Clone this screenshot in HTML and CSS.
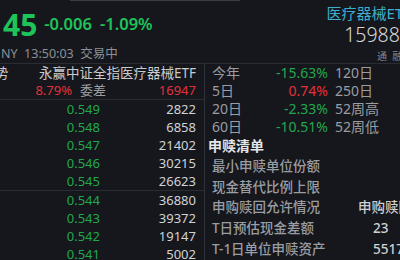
FILE: index.html
```html
<!DOCTYPE html>
<html lang="zh-CN">
<head>
<meta charset="utf-8">
<title>医疗器械ETF</title>
<link rel="stylesheet" href="styles.css">
</head>
<body>
<div class="topbar"><div class="scrollthumb"></div></div>
<header class="head">
  <div class="quote">
    <div class="price-line">
      <span class="price">45</span>
      <span class="chg">-0.006</span>
      <span class="chg">-1.09%</span>
    </div>
    <div class="status">NY&nbsp; 13:50:03&nbsp; 交易中</div>
  </div>
  <div class="ident">
    <div class="name">医疗器械ETF</div>
    <div class="code">159883</div>
    <div class="tags">通&nbsp; 融&nbsp; T</div>
  </div>
</header>
<main class="body">
  <section class="book">
    <div class="book-title"><span class="cut">势</span><span class="fund">永赢中证全指医疗器械ETF</span></div>
    <div class="book-ratio"><span class="pct">8.79%</span><span class="lbl">委差</span><span class="diff">16947</span></div>
    <div class="group">
      <div class="level"><span class="px">0.549</span><span class="vol">2822</span></div>
      <div class="level"><span class="px">0.548</span><span class="vol">6858</span></div>
      <div class="level"><span class="px">0.547</span><span class="vol">21402</span></div>
      <div class="level"><span class="px">0.546</span><span class="vol">30215</span></div>
      <div class="level"><span class="px">0.545</span><span class="vol">26623</span></div>
    </div>
    <div class="group bids">
      <div class="level"><span class="px">0.544</span><span class="vol">36880</span></div>
      <div class="level"><span class="px">0.543</span><span class="vol">39372</span></div>
      <div class="level"><span class="px">0.542</span><span class="vol">19147</span></div>
      <div class="level"><span class="px">0.541</span><span class="vol">5002</span></div>
    </div>
  </section>
  <section class="side">
    <div class="perf">
      <span class="k">今年</span><span class="v down">-15.63%</span><span class="k2">120日</span>
      <span class="k">5日</span><span class="v up">0.74%</span><span class="k2">250日</span>
      <span class="k">20日</span><span class="v down">-2.33%</span><span class="k2">52周高</span>
      <span class="k">60日</span><span class="v down">-10.51%</span><span class="k2">52周低</span>
    </div>
    <div class="sec-title">申赎清单</div>
    <div class="list">
      <div class="item"><span class="ik">最小申赎单位份额</span><span class="iv"></span></div>
      <div class="item"><span class="ik">现金替代比例上限</span><span class="iv"></span></div>
      <div class="item"><span class="ik">申购赎回允许情况</span><span class="iv">申购赎回允许</span></div>
      <div class="item"><span class="ik">T日预估现金差额</span><span class="iv num">23</span></div>
      <div class="item"><span class="ik">T-1日单位申赎资产</span><span class="iv num">5517</span></div>
    </div>
  </section>
</main>
</body>
</html>
```
FILE: styles.css
```css
html, body {
  margin: 0;
  padding: 0;
  width: 400px;
  height: 260px;
  overflow: hidden;
  background: #15171c;
  font-family: "Noto Sans", "Noto Sans CJK SC", sans-serif;
  color: #d4d5d7;
}

.topbar {
  height: 1px;
  display: flex;
}
.scrollthumb {
  margin-left: 70px;
  width: 170px;
  background: #3a3d42;
}

.head {
  height: 62px;
  display: flex;
  justify-content: space-between;
  border-bottom: 1px solid #2a2d33;
}

.quote {
  padding-left: 3px;
  padding-top: 6px;
}
.price-line {
  display: flex;
  align-items: center;
  gap: 7px;
  height: 34px;
}
.price {
  font-size: 30px;
  font-weight: 700;
  color: #1ec45a;
  line-height: 34px;
  margin-top: 1px;
}
.chg {
  font-size: 16.5px;
  font-weight: 600;
  color: #1ec45a;
  line-height: 20px;
}
.chg + .chg {
  margin-left: 1px;
}
.status {
  margin-top: 5px;
  margin-left: -2px;
  font-size: 12.5px;
  line-height: 16px;
  color: #8d9095;
  white-space: nowrap;
}

.ident {
  margin-right: -11px;
  text-align: right;
  white-space: nowrap;
}
.name {
  margin-top: 3px;
  font-size: 15px;
  line-height: 18px;
  color: #3eaecb;
}
.code {
  font-size: 19.5px;
  font-weight: 300;
  line-height: 26px;
  color: #d6d7d9;
}
.tags {
  margin-top: 1px;
  margin-right: -2px;
  font-size: 10px;
  line-height: 14px;
  color: #85888d;
}

.body {
  display: flex;
}

.book {
  flex: none;
  width: 204px;
  border-right: 1px solid #2e3137;
  font-size: 13px;
}
.book-title {
  height: 18px;
  line-height: 18px;
  display: flex;
  justify-content: space-between;
  padding-right: 8px;
  font-size: 13.5px;
  color: #c9cacc;
  white-space: nowrap;
}
.cut {
  margin-left: -5px;
}
.book-ratio {
  height: 17px;
  line-height: 17px;
  display: grid;
  grid-template-columns: 72px 34px 1fr;
  column-gap: 8px;
  padding-right: 8px;
}
.pct {
  text-align: right;
  color: #e2313b;
}
.lbl {
  color: #9a9da2;
}
.diff {
  text-align: right;
  color: #e2313b;
}

.group {
  border-top: 1px solid #2a2d33;
}
.level {
  height: 18px;
  line-height: 18px;
  display: grid;
  grid-template-columns: 100px 1fr;
  padding-right: 8px;
}
.px {
  text-align: right;
  color: #22a84c;
}
.vol {
  text-align: right;
  color: #d2d3d5;
}

.side {
  flex: 1;
  min-width: 0;
  font-size: 14px;
  white-space: nowrap;
}
.perf {
  display: grid;
  grid-template-columns: 40px 76px auto;
  grid-auto-rows: 18px;
  line-height: 18px;
  padding-left: 7px;
}
.k, .k2 {
  color: #9a9da2;
}
.k2 {
  padding-left: 7px;
}
.v {
  text-align: right;
}
.down {
  color: #22a84c;
}
.up {
  color: #e2313b;
}

.sec-title {
  height: 20px;
  line-height: 20px;
  padding-left: 3px;
  font-weight: 700;
  color: #e4e5e7;
}

.list {
  padding-left: 7px;
  font-size: 13.5px;
}
.item {
  height: 20.7px;
  line-height: 20.7px;
  display: grid;
  grid-template-columns: 146px auto;
  font-weight: 500;
}
.ik {
  color: #9a9da2;
}
.iv {
  color: #cfd0d2;
}
.iv.num {
  padding-left: 15px;
}
```
